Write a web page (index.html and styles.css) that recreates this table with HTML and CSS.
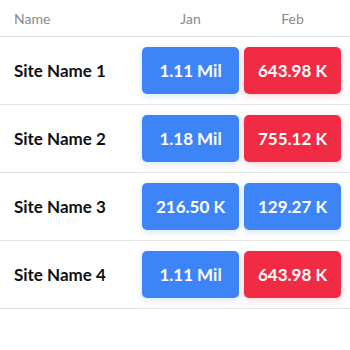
FILE: index.html
```html
<!DOCTYPE html>
<html>
<head>
<meta charset="utf-8">
<link rel="stylesheet" href="styles.css">
</head>
<body>
<div class="table">
  <div class="row head">
    <div class="name">Name</div>
    <div class="col">Jan</div>
    <div class="col">Feb</div>
  </div>
  <div class="row">
    <div class="name site">Site Name 1</div>
    <div class="pill blue">1.11 Mil</div>
    <div class="pill red">643.98 K</div>
  </div>
  <div class="row">
    <div class="name site">Site Name 2</div>
    <div class="pill blue">1.18 Mil</div>
    <div class="pill red">755.12 K</div>
  </div>
  <div class="row">
    <div class="name site">Site Name 3</div>
    <div class="pill blue">216.50 K</div>
    <div class="pill blue">129.27 K</div>
  </div>
  <div class="row">
    <div class="name site">Site Name 4</div>
    <div class="pill blue">1.11 Mil</div>
    <div class="pill red">643.98 K</div>
  </div>
</div>
</body>
</html>
```

FILE: styles.css
```css
html, body {
  margin: 0;
  padding: 0;
  background: #ffffff;
}
body {
  font-family: Lato, "Open Sans", sans-serif;
}
.table {
  width: 350px;
}
.row {
  display: grid;
  grid-template-columns: 1fr 97px 97px;
  column-gap: 5px;
  align-items: center;
  padding: 10px 9px 10px 14px;
  border-bottom: 1px solid #e6e6e6;
}
.row.head {
  padding-top: 0;
  padding-bottom: 0;
  height: 36px;
}
.head .name, .head .col {
  font-size: 14px;
  color: #8a8a8a;
}
.head .col {
  text-align: center;
}
.site {
  font-size: 17px;
  font-weight: 700;
  color: #111;
}
.pill {
  height: 47px;
  border-radius: 5px;
  display: flex;
  align-items: center;
  justify-content: center;
  color: #fff;
  font-size: 17px;
  font-weight: 700;
}
.blue {
  background: #3d84f7;
  box-shadow: 0 2px 7px rgba(61, 132, 247, 0.22);
}
.red {
  background: #f22b44;
  box-shadow: 0 2px 7px rgba(242, 43, 68, 0.22);
}
```
